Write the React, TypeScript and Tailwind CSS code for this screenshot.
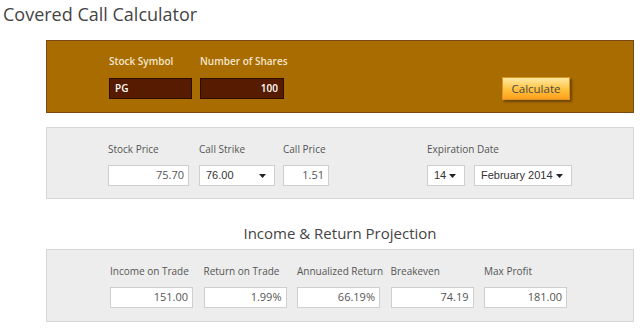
import * as React from 'react'

const sans = { fontFamily: '"Open Sans", sans-serif' }

// arrow used in the select boxes
const Caret = () => (
  <svg width="7" height="4" viewBox="0 0 7 4" className="shrink-0">
    <path d="M0 0h7L3.5 4z" fill="#222" />
  </svg>
)

const Box = ({ w, value, align = 'right' }: { w: string; value: string; align?: 'left' | 'right' }) => (
  <div
    className={`${w} h-[21px] bg-white border border-[#cfcfcf] text-[11px] text-[#555] flex items-center px-[4px] ${
      align === 'right' ? 'justify-end' : 'justify-start'
    }`}
  >
    {value}
  </div>
)

const Select = ({ w, value }: { w: string; value: string }) => (
  <div
    className={`${w} h-[21px] bg-white border border-[#cfcfcf] text-[11px] text-[#333] flex items-center justify-between pl-[6px] pr-[8px] font-['Liberation_Sans',Arial,sans-serif]`}
  >
    <span>{value}</span>
    <Caret />
  </div>
)

const Field = ({ label, className = '', children }: { label: string; className?: string; children: React.ReactNode }) => (
  <div className={`flex flex-col ${className}`}>
    <div className="h-[14px] leading-[14px] text-[10px] text-[#555] whitespace-nowrap">{label}</div>
    <div className="mt-[9px] flex gap-[9px]">{children}</div>
  </div>
)

export default function App() {
  const results = [
    ['Income on Trade', '151.00'],
    ['Return on Trade', '1.99%'],
    ['Annualized Return', '66.19%'],
    ['Breakeven', '74.19'],
    ['Max Profit', '181.00'],
  ]

  return (
    <div className="w-[640px] h-[332px] bg-white overflow-hidden" style={sans}>
      <h1 className="pl-[3px] pt-[1px] h-[40px] text-[18px] leading-[26px] text-[#444]">Covered Call Calculator</h1>

      {/* symbol / shares */}
      <div className="ml-[46px] w-[588px] h-[73px] bg-[#a86c00] border border-[#7b4a14] pl-[62px] pr-[63px] pt-[13px] flex">
        <div className="flex flex-col">
          <div className="h-[14px] leading-[14px] text-[10px] font-semibold text-[#f4e6cc]">Stock Symbol</div>
          <div className="mt-[10px] w-[83px] h-[21px] bg-[#561b00] border border-[#2a0c00] text-[10px] font-semibold text-white flex items-center px-[5px]">
            PG
          </div>
        </div>
        <div className="flex flex-col ml-[8px]">
          <div className="h-[14px] leading-[14px] text-[10px] font-semibold text-[#f4e6cc]">Number of Shares</div>
          <div className="mt-[10px] w-[84px] h-[21px] bg-[#561b00] border border-[#2a0c00] text-[10px] font-semibold text-white flex items-center justify-end px-[5px]">
            100
          </div>
        </div>
        <button className="ml-auto mt-[23px] w-[68px] h-[23px] border border-[#d6962a] bg-gradient-to-b from-[#ffe9a0] via-[#ffc440] to-[#ffa01a] text-[11.5px] text-[#4a4a4a] shadow-[2px_2px_2px_rgba(60,30,0,0.5)]">
          Calculate
        </button>
      </div>

      {/* option inputs */}
      <div className="mt-[14px] ml-[46px] w-[588px] h-[72px] bg-[#ededed] border border-[#d6d6d6] pl-[61px] pt-[14px] flex">
        <Field label="Stock Price">
          <Box w="w-[81px]" value="75.70" />
        </Field>
        <Field label="Call Strike" className="ml-[10px]">
          <Select w="w-[76px]" value="76.00" />
        </Field>
        <Field label="Call Price" className="ml-[8px]">
          <Box w="w-[46px]" value="1.51" />
        </Field>
        <Field label="Expiration Date" className="ml-[98px]">
          <Select w="w-[38px]" value="14" />
          <Select w="w-[98px]" value="February 2014" />
        </Field>
      </div>

      <h2 className="h-[50px] pt-[23px] text-center text-[15px] leading-[22px] text-[#444] pl-[40px]">
        Income &amp; Return Projection
      </h2>

      {/* results */}
      <div className="ml-[46px] w-[588px] h-[73px] bg-[#ededed] border border-[#d6d6d6] pl-[63px] pt-[14px] flex gap-[10.5px]">
        {results.map(([label, value]) => (
          <Field key={label} label={label} className="w-[83px]">
            <Box w="w-[83px]" value={value} />
          </Field>
        ))}
      </div>
    </div>
  )
}
